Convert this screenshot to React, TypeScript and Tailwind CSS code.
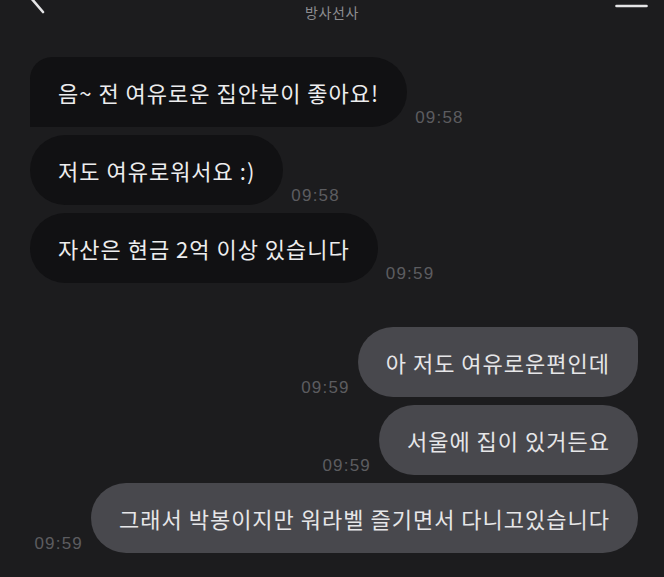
import React from 'react';

interface Message {
  id: number;
  text: string;
  time: string;
  mine: boolean;
  shape: string;
}

const messages: Message[] = [
  { id: 1, text: '음~ 전 여유로운 집안분이 좋아요!', time: '09:58', mine: false, shape: 'rounded-[35px] rounded-tl-[22px] rounded-bl-none' },
  { id: 2, text: '저도 여유로워서요 :)', time: '09:58', mine: false, shape: 'rounded-[35px]' },
  { id: 3, text: '자산은 현금 2억 이상 있습니다', time: '09:59', mine: false, shape: 'rounded-[35px]' },
  { id: 4, text: '아 저도 여유로운편인데', time: '09:59', mine: true, shape: 'rounded-[35px] rounded-tr-[14px]' },
  { id: 5, text: '서울에 집이 있거든요', time: '09:59', mine: true, shape: 'rounded-[35px]' },
  { id: 6, text: '그래서 박봉이지만 워라벨 즐기면서 다니고있습니다', time: '09:59', mine: true, shape: 'rounded-[35px]' },
];

const Time: React.FC<{ value: string }> = ({ value }) => (
  <span className="text-[17px] tracking-[1.2px] leading-none text-[#5c5c60] mb-[1px] font-['Liberation_Sans',sans-serif]">
    {value}
  </span>
);

const Bubble: React.FC<{ msg: Message }> = ({ msg }) => (
  <div className={`flex items-end gap-[8px] ${msg.mine ? 'justify-end' : 'justify-start'}`}>
    {msg.mine && <Time value={msg.time} />}
    <div
      className={`h-[70px] flex items-center px-[28px] text-[22px] tracking-[1px] ${msg.shape} ${
        msg.mine ? 'bg-[#48484d] text-[#e6e6e8]' : 'bg-[#111113] text-[#ededee]'
      }`}
    >
      {msg.text}
    </div>
    {!msg.mine && <Time value={msg.time} />}
  </div>
);

export default function App() {
  const received = messages.filter((m) => !m.mine);
  const sent = messages.filter((m) => m.mine);

  return (
    <div className="w-[664px] h-[577px] overflow-hidden bg-[#1c1c1e] font-['Noto_Sans_CJK_KR','Noto_Sans',sans-serif]">
      <div className="flex h-[24px]">
        <div className="w-[80px] pl-[30px]">
          <svg width="16" height="14" viewBox="0 0 16 14">
            <line x1="1" y1="-2" x2="13" y2="12" stroke="#e4e4e6" strokeWidth="2.6" strokeLinecap="round" />
          </svg>
        </div>
        <div className="flex-1 text-center pt-[2px] text-[14px] tracking-[0.6px] text-[#8c8c90]">방사선사</div>
        <div className="w-[80px] flex justify-end pr-[16px]">
          <svg width="33" height="12" viewBox="0 0 33 12">
            <line x1="1.5" y1="6" x2="31.5" y2="6" stroke="#e4e4e6" strokeWidth="2.6" strokeLinecap="round" />
          </svg>
        </div>
      </div>

      <div className="flex flex-col gap-[8px] pl-[30px] pr-[26px] pt-[33px]">
        {received.map((m) => (
          <Bubble key={m.id} msg={m} />
        ))}
      </div>

      <div className="flex flex-col gap-[8px] pr-[26px] pt-[44px]">
        {sent.map((m) => (
          <Bubble key={m.id} msg={m} />
        ))}
      </div>
    </div>
  );
}
